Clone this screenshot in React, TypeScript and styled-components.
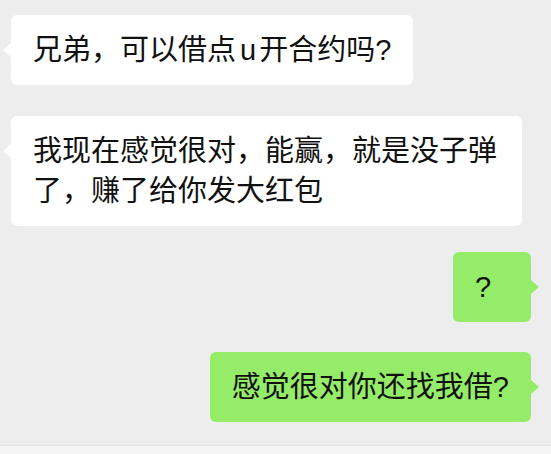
import React from 'react';

import styled, { createGlobalStyle } from 'styled-components';

interface Message {
    id: number;
    mine: boolean;
    content: React.ReactNode;
    gap: number;
}

const GlobalStyle = createGlobalStyle`
    html, body {
        margin: 0;
        padding: 0;
        background: #ededed;
    }
    body {
        font-family: 'Liberation Sans', 'Noto Sans CJK SC', sans-serif;
    }
`;

const Screen = styled.div`
    display: flex;
    flex-direction: column;
    width: 551px;
    height: 454px;
    background: #ededed;
    overflow: hidden;
`;

const ChatList = styled.div`
    flex: 1;
    display: flex;
    flex-direction: column;
    padding: 0 20px 0 11px;
`;

const Row = styled.div<{ $mine: boolean; $gap: number }>`
    display: flex;
    justify-content: ${({ $mine }) => ($mine ? 'flex-end' : 'flex-start')};
    margin-top: ${({ $gap }) => $gap}px;
`;

const Bubble = styled.div<{ $mine: boolean }>`
    position: relative;
    box-sizing: border-box;
    max-width: 511px;
    min-width: 78px;
    padding: 15px 22px;
    border-radius: 6px;
    background: ${({ $mine }) => ($mine ? '#95ec69' : '#ffffff')};
    color: #111111;
    font-size: 29px;
    line-height: 40px;

    &::before {
        content: '';
        position: absolute;
        top: 28px;
        width: 0;
        height: 0;
        border-top: 7px solid transparent;
        border-bottom: 7px solid transparent;
        ${({ $mine }) =>
            $mine
                ? 'right: -8px; border-left: 8px solid #95ec69;'
                : 'left: -8px; border-right: 8px solid #ffffff;'}
    }
`;

const Latin = styled.span`
    margin: 0 3px 0 4px;
`;

const InputBar = styled.div`
    height: 8px;
    border-top: 1px solid #e2e2e2;
    background: #f5f5f5;
`;

const messages: Message[] = [
    {
        id: 1,
        mine: false,
        content: (
            <>
                兄弟，可以借点<Latin>u</Latin>开合约吗?
            </>
        ),
        gap: 15,
    },
    { id: 2, mine: false, content: '我现在感觉很对，能赢，就是没子弹了，赚了给你发大红包', gap: 31 },
    { id: 3, mine: true, content: '?', gap: 26 },
    { id: 4, mine: true, content: '感觉很对你还找我借?', gap: 30 },
];

const App = () => {
    return (
        <>
            <GlobalStyle />
            <Screen>
                <ChatList>
                    {messages.map(({ id, mine, content, gap }) => (
                        <Row key={id} $mine={mine} $gap={gap}>
                            <Bubble $mine={mine}>{content}</Bubble>
                        </Row>
                    ))}
                </ChatList>
                <InputBar />
            </Screen>
        </>
    );
};

export default App;
